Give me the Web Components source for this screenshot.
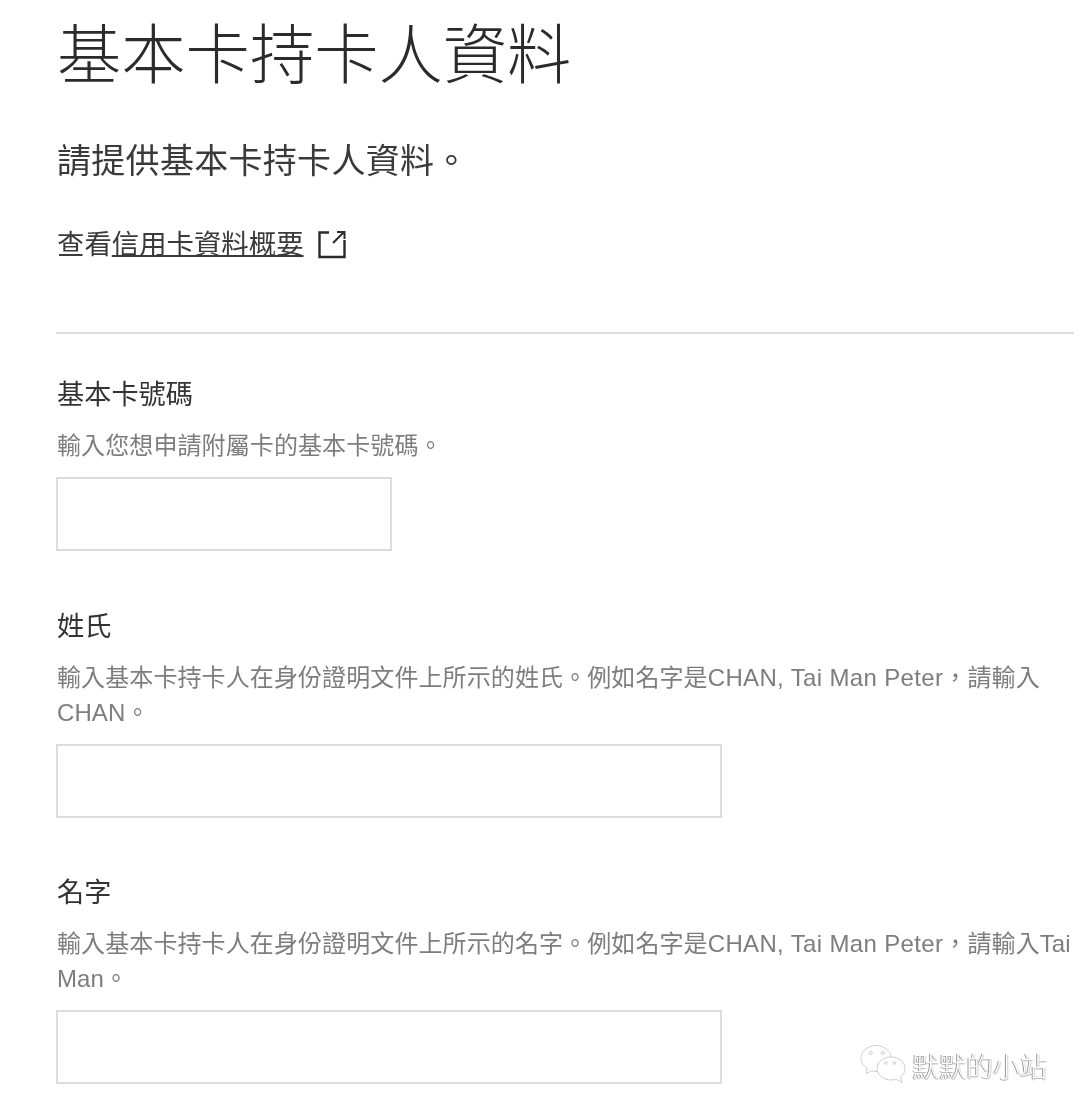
<!DOCTYPE html>
<html lang="zh-Hant">
<head>
<meta charset="utf-8">
<title>基本卡持卡人資料</title>
<style>
  html, body { margin: 0; background: #fff; }
  body { font-family: "Liberation Sans", "Noto Sans CJK TC", sans-serif; height: 1114px; overflow: hidden; }
  .latin { letter-spacing: .35px; }
</style>
</head>
<body>
<card-form>
  <form-header slot="header" heading="基本卡持卡人資料" intro="請提供基本卡持卡人資料。" prefix="查看" link="信用卡資料概要"></form-header>
  <form-field label="基本卡號碼" size="short">輸入您想申請附屬卡的基本卡號碼。</form-field>
  <form-field label="姓氏">輸入基本卡持卡人在身份證明文件上所示的姓氏。例如名字是<span class="latin">CHAN, Tai Man Peter</span>，請輸入<br>CHAN。</form-field>
  <form-field label="名字">輸入基本卡持卡人在身份證明文件上所示的名字。例如名字是<span class="latin">CHAN, Tai Man Peter</span>，請輸入Tai<br>Man。</form-field>
  <wechat-mark slot="overlay" name="默默的小站"></wechat-mark>
</card-form>
<script>
class CardForm extends HTMLElement {
  constructor() {
    super();
    this.attachShadow({ mode: 'open' });
    this.shadowRoot.innerHTML = `
      <style>
        :host { display: block; position: relative; height: 1114px; padding: 0 6px 0 57px; box-sizing: border-box; will-change: transform; }
        .rule { height: 2px; background: #dcdcdc; margin: 0 0 40px -1px; }
        .fields { display: flex; flex-direction: column; gap: 54.5px; }
      </style>
      <slot name="header"></slot>
      <div class="rule"></div>
      <div class="fields"><slot></slot></div>
      <slot name="overlay"></slot>
    `;
  }
}

class FormHeader extends HTMLElement {
  constructor() {
    super();
    this.attachShadow({ mode: 'open' });
  }

  connectedCallback() {
    this.shadowRoot.innerHTML = `
      <style>
        :host { display: block; height: 332px; color: #2b2b2b; font-family: "Noto Sans CJK TC", sans-serif; overflow: hidden; }
        h1 { margin: 0; padding-top: 6px; font-size: 64.3px; line-height: 88px; font-weight: 300; white-space: nowrap; }
        p { margin: 0; padding-top: 40px; font-size: 34px; line-height: 50px; font-weight: 400; letter-spacing: .3px; white-space: nowrap; color: #3a3a3a; }
        .more { display: flex; align-items: center; margin-top: 38px; font-size: 27.4px; line-height: 40px; font-weight: 400; white-space: nowrap; color: #3a3a3a; }
        a { color: inherit; text-decoration: underline; text-underline-offset: 1px; text-decoration-thickness: 2px; }
        svg { width: 30px; height: 30px; margin: 3px 0 0 13px; flex: none; }
      </style>
      <h1>${this.getAttribute('heading')}</h1>
      <p>${this.getAttribute('intro')}</p>
      <div class="more">${this.getAttribute('prefix')}<a href="#">${this.getAttribute('link')}</a>
        <svg viewBox="0 0 30 30" fill="none" stroke="#2b2b2b" stroke-width="2.4">
          <path d="M12 3.500H2.500V28H27.500V11"/>
          <path d="M16 14L27 3M20 3H27.500V10" stroke-width="2"/>
        </svg>
      </div>
    `;
  }
}

class FormField extends HTMLElement {
  constructor() {
    super();
    this.attachShadow({ mode: 'open' });
  }

  connectedCallback() {
    const width = this.getAttribute('size') === 'short' ? 336 : 666;
    this.shadowRoot.innerHTML = `
      <style>
        :host { display: block; font-family: "Liberation Sans", "Noto Sans CJK TC", sans-serif; }
        .label { font-size: 27.2px; line-height: 36px; color: #333; font-family: "Noto Sans CJK TC", sans-serif; font-weight: 400; }
        .help { margin-top: 18px; font-size: 24px; line-height: 35px; color: #7d7d7d; letter-spacing: .1px; font-weight: 400; }
        .box { box-sizing: border-box; display: block; width: ${width}px; height: 74px; margin: 14px 0 0 -1px; border: 2px solid #dcdcdc; background: #fff; }
      </style>
      <div class="label">${this.getAttribute('label')}</div>
      <div class="help"><slot></slot></div>
      <div class="box"></div>
    `;
  }
}

class WechatMark extends HTMLElement {
  constructor() {
    super();
    this.attachShadow({ mode: 'open' });
  }

  connectedCallback() {
    this.shadowRoot.innerHTML = `
      <style>
        :host { position: absolute; left: 860px; top: 1044px; display: flex; align-items: center; gap: 6px; height: 40px; }
        span { padding-top: 4px; font-family: "Noto Sans CJK TC", sans-serif; font-size: 27px; line-height: 36px; font-weight: 300; color: #fff; white-space: nowrap;
          text-shadow: -1px 0 #959595, 0 1px #bcbcbc, 1px 1px #d8d8d8; }
        svg { width: 46px; height: 40px; flex: none; }
      </style>
      <svg viewBox="0 0 46 40" fill="#fff" stroke="#cdcdcd" stroke-width="1">
        <path d="M16 1.500C7.500 1.500 1 7.500 1 14.500C1 18.500 3.500 22 7 24L6.500 29.500L12 26.700C13.500 27.300 15 27.500 16 27.500C24.500 27.500 31.500 21.500 31.500 14.500C31.500 7.500 24.500 1.500 16 1.500Z"/>
        <path d="M31 13C23.500 13 17 18 17 24.500C17 31 23.500 36 31 36C33 36 34.500 35.700 36 35.200L42 38.500L40.500 33C43.500 31 45 28 45 24.500C45 18 38.500 13 31 13Z"/>
        <circle cx="10.700" cy="9" r="1.600" fill="none"/><circle cx="22.700" cy="9" r="1.600" fill="none"/>
        <circle cx="25.700" cy="19" r="1.300" fill="none"/><circle cx="34.300" cy="19" r="1.300" fill="none"/>
      </svg>
      <span>${this.getAttribute('name')}</span>
    `;
  }
}

customElements.define('card-form', CardForm);
customElements.define('form-header', FormHeader);
customElements.define('form-field', FormField);
customElements.define('wechat-mark', WechatMark);
</script>
</body>
</html>
